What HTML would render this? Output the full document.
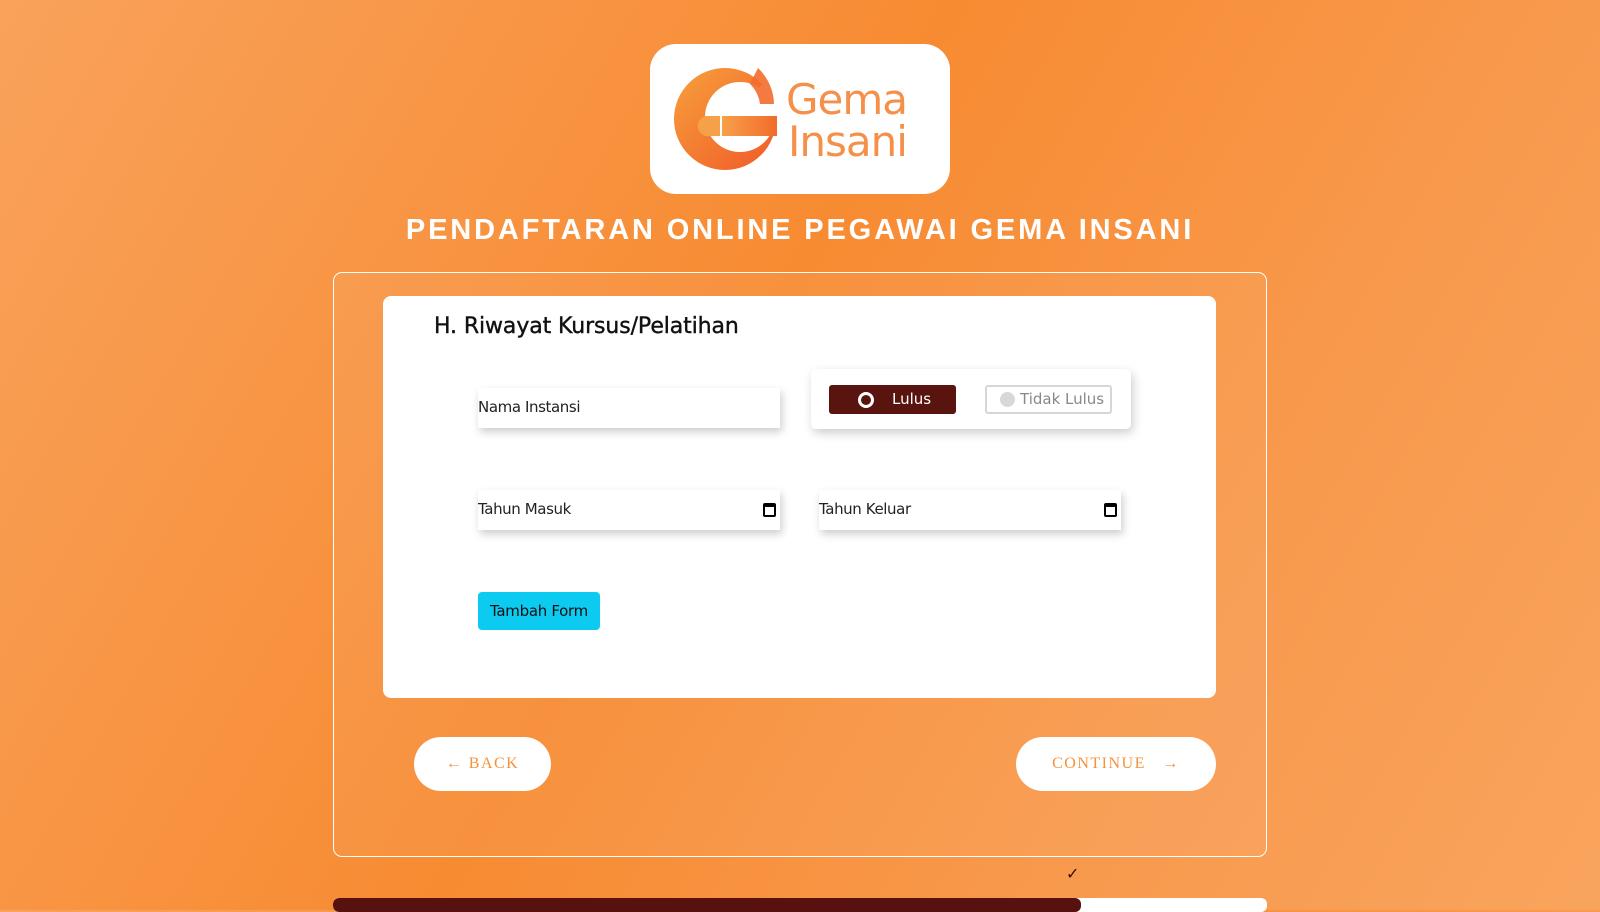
<!DOCTYPE html>
<html><head><meta charset="utf-8"><style>
*{box-sizing:border-box;margin:0;padding:0}
body{width:1600px;height:910px;overflow:hidden;position:relative;font-family:"Liberation Sans",sans-serif;background:linear-gradient(120deg,#f9a25b 0%,#f78b32 45%,#f89a4e 75%,#f9a45d 100%)}
.abs{position:absolute}
.logo{left:650px;top:44px;width:300px;height:150px;background:#fff;border-radius:26px}
.title{left:0;width:1600px;top:214px;text-align:center;color:#fff;font-weight:bold;font-size:29px;letter-spacing:2.85px}
.outer{left:333px;top:272px;width:934px;height:585px;border:1px solid #fff;border-radius:9px;background:rgba(255,255,255,0.06)}
.inner{left:383px;top:296px;width:833px;height:402px;background:#fff;border-radius:8px}
h2{position:absolute;left:434px;top:314px;font-size:22px;font-weight:normal;color:#111;font-family:"DejaVu Sans",sans-serif;letter-spacing:-0.1px;-webkit-text-stroke:0.4px #111}
.inp{background:#fff;box-shadow:2px 4px 8px rgba(0,0,0,0.2);font-size:15px;color:#222;padding-left:0;line-height:38px;height:40px;font-family:"DejaVu Sans",sans-serif;letter-spacing:-0.4px}
.cal{position:absolute;right:4px;top:13px;width:13px;height:14px;border:2px solid #000;border-top-width:4px;border-radius:2px}
.radio{left:811px;top:369px;width:320px;height:60px;background:#fff;border-radius:5px;box-shadow:2px 4px 10px rgba(0,0,0,0.2)}
.btn{border-radius:30px;background:#fff;color:#f7913b;font-family:"Liberation Serif",serif;font-size:16px;letter-spacing:1.5px;line-height:54px}
</style></head><body>
<div class="abs logo">
<svg width="300" height="150" viewBox="0 0 300 150">
<defs><linearGradient id="g" x1="0" y1="0" x2="1" y2="1"><stop offset="0" stop-color="#f7a03c"/><stop offset="1" stop-color="#f05a28"/></linearGradient>
<linearGradient id="g2" x1="0" y1="0" x2="1" y2="0"><stop offset="0" stop-color="#f7a04a"/><stop offset="1" stop-color="#f26b2b"/></linearGradient></defs>
<circle cx="75" cy="75" r="51" fill="url(#g)"/>
<circle cx="90" cy="73" r="35" fill="#fff"/>
<path d="M75 75 L135 20 L135 72 Z" fill="#fff"/>
<path d="M108 24 A51 51 0 0 1 124 60 L110 60 A35 35 0 0 0 100 40 Z" fill="#f26b2b" opacity="0.9"/>
<path d="M72 72 L127 72 L127 92 L72 92 Z" fill="url(#g2)"/>
<path d="M56 72 L70 72 L70 92 L60 92 A10 10 0 0 1 56 72Z" fill="#f7a04a"/>
<text x="136" y="70" font-family="DejaVu Sans,sans-serif" font-size="42" fill="#f5904a" letter-spacing="-1">Gema</text>
<text x="138" y="112" font-family="DejaVu Sans,sans-serif" font-size="42" fill="#f5904a" letter-spacing="-1">Insani</text>
</svg></div>
<div class="abs title">PENDAFTARAN ONLINE PEGAWAI GEMA INSANI</div>
<div class="abs outer"></div>
<div class="abs inner"></div>
<h2>H. Riwayat Kursus/Pelatihan</h2>
<div class="abs inp" style="left:478px;top:388px;width:302px">Nama Instansi</div>
<div class="abs radio">
 <div class="abs" style="left:18px;top:16px;width:127px;height:29px;background:#5a1410;border-radius:3px;color:#fff;font-size:15px;line-height:29px;font-family:'DejaVu Sans',sans-serif">
  <span class="abs" style="left:29px;top:7px;width:16px;height:16px;border:3px solid #fff;border-radius:50%"></span><span class="abs" style="left:63px">Lulus</span></div>
 <div class="abs" style="left:174px;top:16px;width:127px;height:29px;border:2px solid #d6d6d6;border-radius:3px;color:#888;font-size:15px;line-height:25px;font-family:'DejaVu Sans',sans-serif">
  <span class="abs" style="left:13px;top:5px;width:15px;height:15px;background:#d8d8d8;border-radius:50%"></span><span class="abs" style="left:33px">Tidak Lulus</span></div>
</div>
<div class="abs inp" style="left:478px;top:490px;width:302px">Tahun Masuk<span class="cal"></span></div>
<div class="abs inp" style="left:819px;top:490px;width:302px">Tahun Keluar<span class="cal"></span></div>
<div class="abs" style="left:478px;top:592px;width:122px;height:38px;background:#0dcaf0;border-radius:4px;font-size:15px;line-height:38px;text-align:center;color:#111;font-family:'DejaVu Sans',sans-serif;letter-spacing:-0.3px">Tambah Form</div>
<div class="abs btn" style="left:414px;top:737px;width:137px;height:54px;text-align:center">&#8592; BACK</div>
<div class="abs btn" style="left:1016px;top:737px;width:200px;height:54px;text-align:center">CONTINUE &nbsp;&nbsp;&#8594;</div>
<div class="abs" style="left:1066px;top:864px;color:#3a0a08;font-size:16px">&#10003;</div>
<div class="abs" style="left:333px;top:898px;width:934px;height:14px;background:#fff;border-radius:6px;overflow:hidden"><div style="width:748px;height:14px;background:#57120f;border-radius:6px"></div></div>
</body></html>
